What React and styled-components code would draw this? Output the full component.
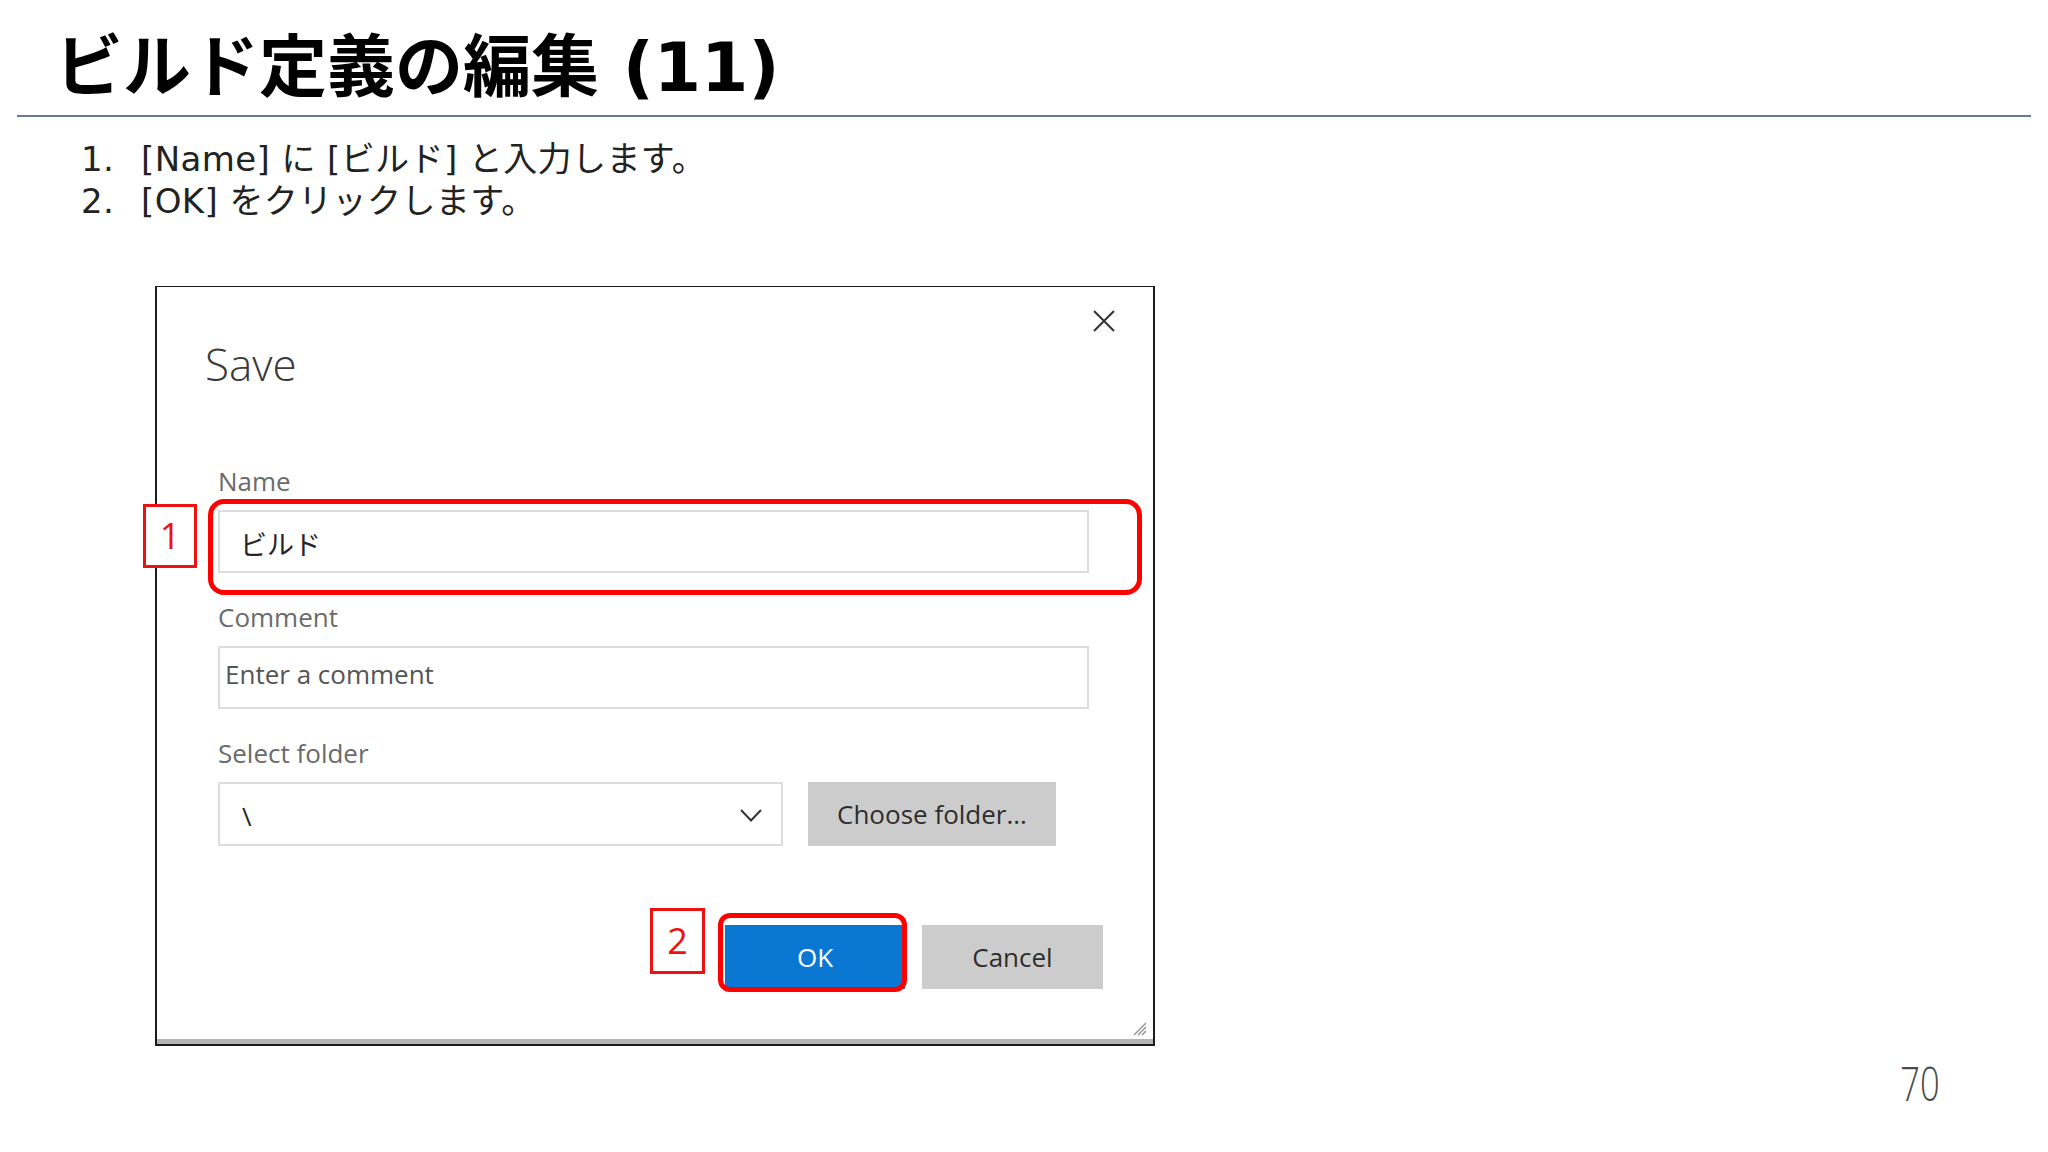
import React from 'react';
import styled, { createGlobalStyle } from 'styled-components';

const GlobalStyle = createGlobalStyle`
  html, body {
    margin: 0;
    padding: 0;
    background: #ffffff;
  }
  * {
    box-sizing: border-box;
  }
`;

const Slide = styled.div`
  width: 2048px;
  height: 1152px;
  display: flex;
  flex-direction: column;
  background: #ffffff;
  overflow: hidden;
`;

const Header = styled.header`
  padding-top: 28px;
`;

const Title = styled.h1`
  margin: 0 0 7px;
  padding-left: 55px;
  font-family: 'DejaVu Sans', 'Noto Sans CJK JP', sans-serif;
  font-size: 68px;
  font-weight: 700;
  line-height: 80px;
  color: #000000;
`;

const Rule = styled.div`
  margin: 0 17px;
  height: 2px;
  background: #62799a;
`;

const Steps = styled.ol`
  list-style: none;
  margin: 21px 0 0;
  padding: 0 0 0 81px;
  font-family: 'DejaVu Sans', 'Noto Sans CJK JP', sans-serif;
  font-size: 34px;
  line-height: 42px;
  letter-spacing: 0.4px;
  color: #222222;
`;

const Step = styled.li`
  display: grid;
  grid-template-columns: 60px auto;
`;

const Body = styled.main`
  padding: 64px 0 0 155px;
`;

const Dialog = styled.section`
  position: relative;
  width: 1000px;
  height: 760px;
  border: 2px solid #1c1c1c;
  border-top-width: 1px;
  background: #ffffff;
  box-shadow: inset 0 -5px 0 #b4b4b4;
  font-family: 'Open Sans', 'Noto Sans CJK JP', sans-serif;
`;

const CloseButton = styled.button`
  position: absolute;
  top: 23px;
  right: 38px;
  width: 22px;
  height: 22px;
  padding: 0;
  border: none;
  background: transparent;
  display: flex;
`;

const DialogTitle = styled.h2`
  margin: 55px 0 0;
  padding-left: 48px;
  font-size: 44px;
  font-weight: 300;
  line-height: 44px;
  color: #3a3a3a;
`;

const Form = styled.div`
  margin-top: 82px;
  padding-left: 61px;
  display: flex;
  flex-direction: column;
  gap: 31px;
`;

const Field = styled.div`
  display: flex;
  flex-direction: column;
  gap: 16px;
`;

const Label = styled.label`
  font-size: 26px;
  line-height: 26px;
  color: #6b6b6b;
`;

const InputWrap = styled.div`
  position: relative;
  width: ${({ $width }) => $width}px;
`;

const Input = styled.div`
  height: ${({ $height }) => $height || 63}px;
  border: 2px solid #dcdcdc;
  background: #ffffff;
  display: flex;
  align-items: center;
  padding-left: ${({ $pad }) => $pad}px;
  padding-top: ${({ $shift }) => ($shift > 0 ? $shift : 0)}px;
  padding-bottom: ${({ $shift }) => ($shift < 0 ? -$shift : 0)}px;
  font-size: ${({ $size }) => $size || 26}px;
  color: ${({ $muted }) => ($muted ? '#555555' : '#262626')};
`;

const FolderRow = styled.div`
  display: flex;
  gap: 25px;
`;

const SelectBox = styled(Input)`
  justify-content: space-between;
  padding-right: 19px;
`;

const GreyButton = styled.button`
  width: ${({ $width }) => $width}px;
  height: 64px;
  border: none;
  background: #cccccc;
  font-family: 'Open Sans', sans-serif;
  font-size: 26px;
  color: #2e2e2e;
  padding: 0;
`;

const Actions = styled.div`
  margin-top: 79px;
  padding-right: 50px;
  display: flex;
  justify-content: flex-end;
  gap: 17px;
`;

const ButtonWrap = styled.div`
  position: relative;
`;

const PrimaryButton = styled.button`
  width: 180px;
  height: 64px;
  border: none;
  background: #0a78d2;
  font-family: 'Open Sans', sans-serif;
  font-size: 26px;
  color: #ffffff;
  padding: 0;
`;

const Highlight = styled.div`
  position: absolute;
  left: ${({ $l }) => $l}px;
  top: ${({ $t }) => $t}px;
  width: ${({ $w }) => $w}px;
  height: ${({ $h }) => $h}px;
  border: 5px solid #ff0000;
  border-radius: ${({ $r }) => $r}px;
  pointer-events: none;
`;

const Badge = styled.div`
  position: absolute;
  left: ${({ $l }) => $l}px;
  top: ${({ $t }) => $t}px;
  width: ${({ $w }) => $w}px;
  height: ${({ $h }) => $h}px;
  border: 3px solid #ee1111;
  background: #ffffff;
  display: flex;
  align-items: center;
  justify-content: center;
  font-family: 'Open Sans', sans-serif;
  font-size: 36px;
  line-height: 1;
  color: #ee1111;
`;

const Grip = styled.svg`
  position: absolute;
  right: 6px;
  bottom: 8px;
`;

const Footer = styled.footer`
  display: flex;
  justify-content: flex-end;
  padding: 13px 108px 0 0;
`;

const PageNumber = styled.span`
  display: inline-block;
  font-family: 'Open Sans', sans-serif;
  font-size: 48px;
  font-weight: 300;
  line-height: 48px;
  color: #4a4a4a;
  transform: scaleX(0.72);
  transform-origin: right center;
`;

const steps = [
  '[Name] に [ビルド] と入力します。',
  '[OK] をクリックします。'
];

const CloseIcon = () => (
  <svg width="22" height="22" viewBox="0 0 22 22">
    <path d="M1 1 L21 21 M21 1 L1 21" stroke="#333" strokeWidth="2" fill="none" />
  </svg>
);

const Chevron = () => (
  <svg width="22" height="13" viewBox="0 0 22 13">
    <path d="M1 1 L11 11.5 L21 1" stroke="#333" strokeWidth="2" fill="none" />
  </svg>
);

const App = () => {
  return (
    <>
      <GlobalStyle />
      <Slide>
        <Header>
          <Title>ビルド定義の編集 (11)</Title>
          <Rule />
        </Header>

        <Steps>
          {steps.map((text, index) => (
            <Step key={index}>
              <span>{index + 1}.</span>
              <span>{text}</span>
            </Step>
          ))}
        </Steps>

        <Body>
          <Dialog>
            <CloseButton aria-label="Close">
              <CloseIcon />
            </CloseButton>
            <DialogTitle>Save</DialogTitle>

            <Form>
              <Field>
                <Label>Name</Label>
                <InputWrap $width={871}>
                  <Input $pad={20} $size={27} $shift={3}>ビルド</Input>
                  <Highlight $l={-10} $t={-11} $w={934} $h={96} $r={16} />
                  <Badge $l={-75} $t={-6} $w={54} $h={64}>1</Badge>
                </InputWrap>
              </Field>

              <Field>
                <Label>Comment</Label>
                <InputWrap $width={871}>
                  <Input $pad={5} $muted $shift={-8}>Enter a comment</Input>
                </InputWrap>
              </Field>

              <Field>
                <Label>Select folder</Label>
                <FolderRow>
                  <InputWrap $width={565}>
                    <SelectBox $pad={22} $height={64} $shift={3}>
                      <span>\</span>
                      <Chevron />
                    </SelectBox>
                  </InputWrap>
                  <GreyButton $width={248}>Choose folder...</GreyButton>
                </FolderRow>
              </Field>
            </Form>

            <Actions>
              <ButtonWrap>
                <PrimaryButton>OK</PrimaryButton>
                <Highlight $l={-7} $t={-12} $w={189} $h={79} $r={12} />
                <Badge $l={-75} $t={-17} $w={55} $h={66}>2</Badge>
              </ButtonWrap>
              <GreyButton $width={181}>Cancel</GreyButton>
            </Actions>

            <Grip width="14" height="14" viewBox="0 0 14 14">
              <path d="M13 1 L1 13 M13 5 L5 13 M13 9 L9 13" stroke="#8a8a8a" strokeWidth="1.2" />
            </Grip>
          </Dialog>
        </Body>

        <Footer>
          <PageNumber>70</PageNumber>
        </Footer>
      </Slide>
    </>
  );
};

export default App;
